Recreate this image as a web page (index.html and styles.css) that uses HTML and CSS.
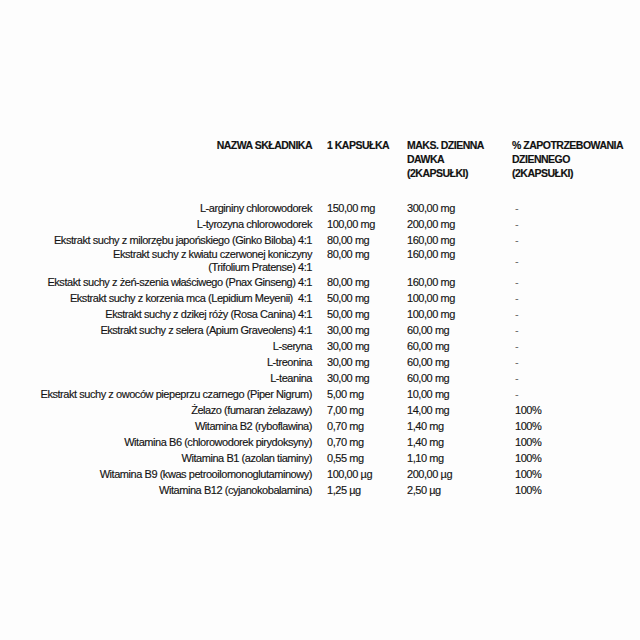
FILE: index.html
```html
<!DOCTYPE html>
<html lang="pl">
<head>
<meta charset="utf-8">
<title>Skład</title>
<link rel="stylesheet" href="styles.css">
</head>
<body>
<main class="sheet">
  <div class="row head">
    <div class="name">NAZWA SKŁADNIKA</div>
    <div>1 KAPSUŁKA</div>
    <div>MAKS. DZIENNA<br>DAWKA<br>(2KAPSUŁKI)</div>
    <div>% ZAPOTRZEBOWANIA<br>DZIENNEGO<br>(2KAPSUŁKI)</div>
  </div>
  <div class="body">
    <div class="row"><div class="name">L-argininy chlorowodorek</div><div>150,00 mg</div><div>300,00 mg</div><div class="pct dash">-</div></div>
    <div class="row"><div class="name">L-tyrozyna chlorowodorek</div><div>100,00 mg</div><div>200,00 mg</div><div class="pct dash">-</div></div>
    <div class="row"><div class="name">Ekstrakt suchy z milorzębu japońskiego (Ginko Biloba) 4:1</div><div>80,00 mg</div><div>160,00 mg</div><div class="pct dash">-</div></div>
    <div class="row wrap"><div class="name">Ekstrakt suchy z kwiatu czerwonej koniczyny<br>(Trifolium Pratense) 4:1</div><div>80,00 mg</div><div>160,00 mg</div><div class="pct dash mid">-</div></div>
    <div class="row"><div class="name">Ekstakt suchy z żeń-szenia właściwego (Pnax Ginseng) 4:1</div><div>80,00 mg</div><div>160,00 mg</div><div class="pct dash">-</div></div>
    <div class="row"><div class="name">Ekstrakt suchy z korzenia mca (Lepidium Meyenii)&nbsp; 4:1</div><div>50,00 mg</div><div>100,00 mg</div><div class="pct dash">-</div></div>
    <div class="row"><div class="name">Ekstrakt suchy z dzikej róży (Rosa Canina) 4:1</div><div>50,00 mg</div><div>100,00 mg</div><div class="pct dash">-</div></div>
    <div class="row"><div class="name">Ekstrakt suchy z selera (Apium Graveolens) 4:1</div><div>30,00 mg</div><div>60,00 mg</div><div class="pct dash">-</div></div>
    <div class="row"><div class="name">L-seryna</div><div>30,00 mg</div><div>60,00 mg</div><div class="pct dash">-</div></div>
    <div class="row"><div class="name">L-treonina</div><div>30,00 mg</div><div>60,00 mg</div><div class="pct dash">-</div></div>
    <div class="row"><div class="name">L-teanina</div><div>30,00 mg</div><div>60,00 mg</div><div class="pct dash">-</div></div>
    <div class="row"><div class="name">Ekstrakt suchy z owoców piepeprzu czarnego (Piper Nigrum)</div><div>5,00 mg</div><div>10,00 mg</div><div class="pct dash">-</div></div>
    <div class="row"><div class="name">Żelazo (fumaran żelazawy)</div><div>7,00 mg</div><div>14,00 mg</div><div class="pct">100%</div></div>
    <div class="row"><div class="name">Witamina B2 (ryboflawina)</div><div>0,70 mg</div><div>1,40 mg</div><div class="pct">100%</div></div>
    <div class="row"><div class="name">Witamina B6 (chlorowodorek pirydoksyny)</div><div>0,70 mg</div><div>1,40 mg</div><div class="pct">100%</div></div>
    <div class="row"><div class="name">Witamina B1 (azolan tiaminy)</div><div>0,55 mg</div><div>1,10 mg</div><div class="pct">100%</div></div>
    <div class="row"><div class="name">Witamina B9 (kwas petrooilomonoglutaminowy)</div><div>100,00 µg</div><div>200,00 µg</div><div class="pct">100%</div></div>
    <div class="row"><div class="name">Witamina B12 (cyjanokobalamina)</div><div>1,25 µg</div><div>2,50 µg</div><div class="pct">100%</div></div>
  </div>
</main>
</body>
</html>
```
FILE: styles.css
```css
html, body {
  margin: 0;
  background: #fdfdfd;
}
.sheet {
  padding-top: 138px;
  font-family: "Liberation Sans", Arial, sans-serif;
  color: #141414;
  font-size: 11px;
  letter-spacing: -0.45px;
  -webkit-text-stroke: 0.15px #141414;
}
.row {
  display: grid;
  grid-template-columns: 312px 65px 90px 1fr;
  column-gap: 15px;
  line-height: 16px;
  white-space: nowrap;
}
.name {
  text-align: right;
}
.head {
  font-weight: bold;
  font-size: 10.5px;
  line-height: 14px;
  letter-spacing: -0.5px;
  margin-bottom: 20px;
  color: #111;
}
.row.wrap {
  line-height: 13px;
}
.pct {
  padding-left: 3px;
}
.dash {
  color: #666;
  -webkit-text-stroke: 0;
}
.mid {
  align-self: center;
}
```
